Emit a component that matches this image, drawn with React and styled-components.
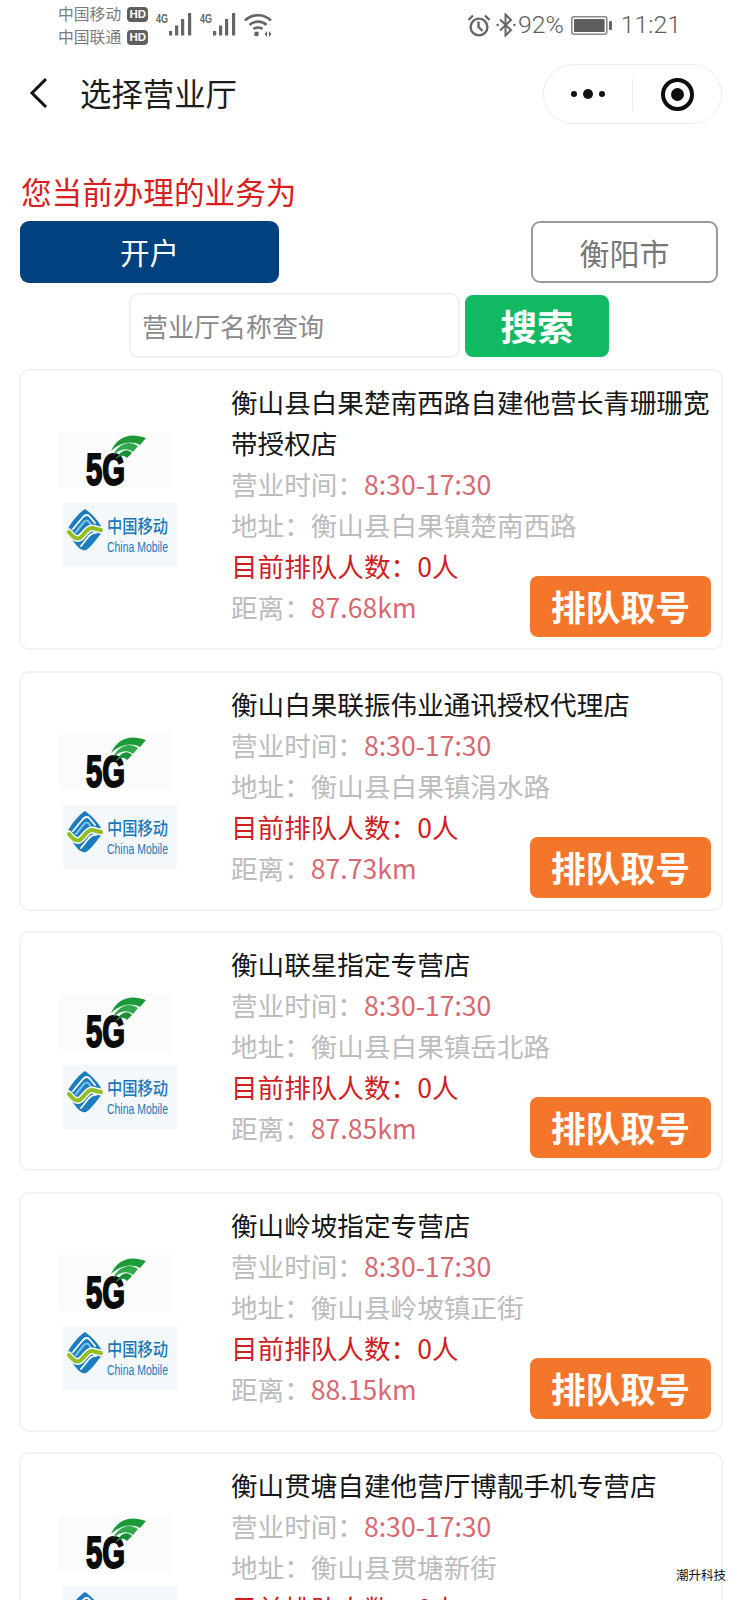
import React from 'react';
import styled, { createGlobalStyle } from 'styled-components';

const FONT = '"Noto Sans CJK SC", "Noto Sans", sans-serif';

const halls = [
  { name: '衡山县白果楚南西路自建他营长青珊珊宽带授权店', address: '衡山县白果镇楚南西路', distance: '87.68km' },
  { name: '衡山白果联振伟业通讯授权代理店', address: '衡山县白果镇涓水路', distance: '87.73km' },
  { name: '衡山联星指定专营店', address: '衡山县白果镇岳北路', distance: '87.85km' },
  { name: '衡山岭坡指定专营店', address: '衡山县岭坡镇正街', distance: '88.15km' },
  // the last card runs off the bottom of the screen, its distance is never seen
  { name: '衡山贯塘自建他营厅博靓手机专营店', address: '衡山县贯塘新街', distance: '' }
];

const GlobalStyle = createGlobalStyle`
  html, body {
    margin: 0;
    padding: 0;
    background: #fff;
  }
  #root {
    width: 738px;
    height: 1600px;
    overflow: hidden;
  }
`;

const Page = styled.div`
  position: relative;
  width: 738px;
  height: 1600px;
  overflow: hidden;
  background: #fff;
  font-family: ${FONT};
`;

const StatusBar = styled.div`
  height: 52px;
  display: flex;
  align-items: flex-start;
  justify-content: space-between;
  padding: 0 57px 0 58px;
  color: #6f6f6f;
`;

const StatusLeft = styled.div`
  display: flex;
  align-items: flex-start;
`;

const Carriers = styled.div`
  display: flex;
  flex-direction: column;
  gap: 7px;
  padding-top: 6px;
  margin-right: 8px;
`;

const Carrier = styled.div`
  display: flex;
  align-items: center;
  gap: 6px;
  height: 16px;
  font-size: 15.8px;
  line-height: 16px;
  color: #7c7c7c;
`;

const HdBadge = styled.span`
  width: 21px;
  height: 15px;
  border-radius: 4px;
  background: #5f5f5f;
  color: #fff;
  font-family: "Liberation Sans", sans-serif;
  font-size: 11.5px;
  font-weight: 700;
  line-height: 15px;
  text-align: center;
`;

const StatusIcons = styled.div`
  display: flex;
  align-items: flex-start;
  gap: 7px;
  padding-top: 13px;
`;

const StatusRight = styled.div`
  display: flex;
  align-items: center;
  height: 50px;
`;

const StatusText = styled.span`
  font-family: Roboto, sans-serif;
  font-size: 24.8px;
  font-weight: 300;
  line-height: 50px;
  color: #5c5c5c;
`;

const NavBar = styled.div`
  height: 82px;
  display: flex;
  align-items: center;
  padding: 0 16px 0 28px;
`;

const NavTitle = styled.div`
  flex: 1;
  margin-left: 32px;
  font-size: 31.4px;
  line-height: 40px;
  color: #1c1c1c;
`;

const Capsule = styled.div`
  box-sizing: border-box;
  width: 179px;
  height: 60px;
  margin-top: 2px;
  display: flex;
  align-items: center;
  border: 1px solid #ececec;
  border-radius: 30px;
`;

const CapsulePart = styled.div`
  flex: 1;
  display: flex;
  align-items: center;
  justify-content: center;
  gap: 6px;
`;

const CapsuleDivider = styled.div`
  width: 1px;
  height: 33px;
  background: #ededed;
`;

const Dot = styled.span`
  width: ${p => p.$size}px;
  height: ${p => p.$size}px;
  border-radius: 50%;
  background: #111;
`;

const TargetRing = styled.div`
  box-sizing: border-box;
  width: 33px;
  height: 33px;
  border: 4px solid #0c0c0c;
  border-radius: 50%;
  display: flex;
  align-items: center;
  justify-content: center;
`;

const TargetDot = styled.span`
  width: 13px;
  height: 13px;
  border-radius: 50%;
  background: #0c0c0c;
`;

const Content = styled.div`
  padding: 37px 15px 0 19px;
`;

const Notice = styled.div`
  padding-left: 2px;
  font-size: 30.6px;
  line-height: 40px;
  color: #d81e1e;
`;

const BusinessRow = styled.div`
  display: flex;
  justify-content: space-between;
  margin: 10px 5px 0 1px;
`;

const BusinessButton = styled.div`
  width: 259px;
  height: 62px;
  border-radius: 9px;
  background: #02417f;
  color: #fff;
  font-size: 29.6px;
  line-height: 62px;
  text-align: center;
`;

const CityButton = styled.div`
  box-sizing: border-box;
  width: 187px;
  height: 62px;
  border: 2px solid #9b9b9b;
  border-radius: 9px;
  color: #777;
  font-size: 30px;
  line-height: 58px;
  text-align: center;
`;

const SearchRow = styled.div`
  display: flex;
  align-items: center;
  gap: 5px;
  margin: 10px 0 11px 110px;
`;

const SearchInput = styled.div`
  box-sizing: border-box;
  width: 331px;
  height: 65px;
  padding-left: 11px;
  border: 2px solid #f0f0f0;
  border-radius: 9px;
  color: #8a8a8a;
  font-size: 26px;
  line-height: 61px;
`;

const SearchButton = styled.div`
  width: 144px;
  height: 62px;
  border-radius: 8px;
  background: #11b963;
  color: #fff;
  font-size: 36.6px;
  font-weight: 700;
  line-height: 62px;
  text-align: center;
`;

const CardList = styled.div`
  display: flex;
  flex-direction: column;
  gap: 20.6px;
`;

const Card = styled.div`
  position: relative;
  display: flex;
  padding: 10px 8px 21px 0;
  border: 2px solid #f2f2f2;
  border-radius: 10px;
`;

const LogoColumn = styled.div`
  flex: none;
  width: 173px;
  padding: 51px 0 0 37px;
  display: flex;
  flex-direction: column;
  gap: 15px;
`;

const Info = styled.div`
  flex: 1;
  min-width: 0;
  font-size: 26.6px;
  line-height: 41px;
`;

const HallName = styled.div`
  color: #161616;
`;

const InfoLine = styled.div`
  color: ${p => p.$color || '#bcbcbc'};
`;

const Value = styled.span`
  color: #d8696f;
`;

const TicketButton = styled.div`
  position: absolute;
  right: 10px;
  bottom: 11px;
  width: 181px;
  height: 61px;
  border-radius: 8px;
  background: #f3762b;
  color: #fff;
  font-size: 34.8px;
  font-weight: 700;
  line-height: 61px;
  text-align: center;
`;

const Watermark = styled.div`
  position: absolute;
  right: 12px;
  top: 1566px;
  font-size: 12.5px;
  line-height: 18px;
  color: #111;
`;

const LogoBox = styled.svg`
  display: block;
  overflow: visible;
  background: ${p => p.$bg};
  margin-left: ${p => p.$indent || 0}px;
`;

const Signal = () => (
  <svg width="37" height="23" viewBox="0 0 37 23">
    <text x="0" y="10" fontFamily="Liberation Sans, sans-serif" fontWeight="700" fontSize="12" fill="#666" textLength="12" lengthAdjust="spacingAndGlyphs">4G</text>
    <g fill="#666">
      <rect x="13" y="18" width="3.2" height="4.5" />
      <rect x="19" y="12.5" width="3.2" height="10" />
      <rect x="25" y="6" width="3.2" height="16.5" />
      <rect x="32" y="0" width="3.2" height="22.5" />
    </g>
  </svg>
);

const Wifi = () => (
  <svg width="28" height="24" viewBox="0 0 28 24" fill="none" stroke="#666" strokeWidth="2.6">
    <path d="M1 7.5 C8 0.5 20 0.5 27 7.5" />
    <path d="M5.5 12 C10 7.5 18 7.5 22.5 12" />
    <path d="M9.5 16 C12 14 16 14 18.5 16" />
    <circle cx="12.5" cy="21" r="2.4" fill="#666" stroke="none" />
    <path d="M20.5 21 l2.6 -3 v6 z M27.5 21 l-2.6 -3 v6 z" fill="#666" stroke="none" />
  </svg>
);

const Alarm = () => (
  <svg width="24" height="23" viewBox="0 0 24 23" fill="none" stroke="#666" strokeWidth="2.4">
    <circle cx="12" cy="13" r="8.4" />
    <path d="M11.5 7.5 V13 L15.5 17" />
    <path d="M1.5 6 L6 1.5 M22.5 6 L18 1.5" />
  </svg>
);

const Bluetooth = () => (
  <svg width="20" height="24" viewBox="0 0 20 24" fill="none" stroke="#666" strokeWidth="2" style={{ margin: '0 2px 0 5px' }}>
    <path d="M4 6.5 L15 17 L9.5 22.5 V1.5 L15 7 L4 17.5" />
    <circle cx="1.6" cy="12" r="1.3" fill="#666" stroke="none" />
    <circle cx="18.4" cy="12" r="1.3" fill="#666" stroke="none" />
  </svg>
);

const Battery = () => (
  <svg width="41" height="19" viewBox="0 0 41 19" style={{ margin: '0 9px 0 7px' }}>
    <rect x="0.8" y="0.8" width="35" height="17.4" rx="2.4" fill="none" stroke="#8a8a8a" strokeWidth="1.6" />
    <rect x="3" y="3" width="30.6" height="13" fill="#5f5f5f" />
    <rect x="38" y="5" width="3" height="9" rx="1" fill="#666" />
  </svg>
);

const BackIcon = () => (
  <svg width="20" height="32" viewBox="0 0 20 32" fill="none" stroke="#111" strokeWidth="3">
    <path d="M18 2 L4 16 L18 30" />
  </svg>
);

const FiveGLogo = () => (
  <LogoBox $bg="#fbfbfb" width="115" height="56" viewBox="0 0 115 56">
    <text
      x="28"
      y="53"
      fontFamily="Liberation Sans, sans-serif"
      fontSize="44"
      fontWeight="700"
      fill="#0b0b0b"
      stroke="#0b0b0b"
      strokeWidth="2"
      textLength="39"
      lengthAdjust="spacingAndGlyphs"
    >
      5G
    </text>
    <path d="M53 19 C58 7 70 -1 88 6 L82 13 C72 8 62 11 53 19 Z" fill="#1c9a3a" />
    <path d="M55 23 C60 13 70 7 80 14 L75 20 C69 15 62 17 55 23 Z" fill="#2fa94b" />
    <path d="M57 28 C62 20 68 15 74 21 L69 26 C65 22 62 24 57 28 Z" fill="#1a8f35" />
  </LogoBox>
);

const MobileLogo = () => (
  <LogoBox $bg="#f5f8fb" $indent={5} width="114" height="64" viewBox="0 0 114 64">
    <path
      d="M22 6 C28 10 36 18 39 25 C40 28 38 31 36 33 C32 38 28 44 23 47 C20 48 17 46 14 43 L7 34 C4 30 4 26 7 22 C11 16 17 9 22 6 Z"
      fill="#1b7dbd"
    />
    <g fill="none" strokeLinecap="round">
      <path d="M10 26 L20 14 Q24 10 27 14 L32 20" stroke="#fff" strokeWidth="1.8" />
      <path d="M13 29 L21 19 Q24 16 26 19 L28 22" stroke="#7cc0e6" strokeWidth="2.2" />
      <path d="M18 43 L26 33 Q30 29 33 30" stroke="#fff" strokeWidth="1.8" />
      <path d="M6 29 C12 37 16 37 20 32 C24 27 27 23 33 26 L38 27" stroke="#f5f8fb" strokeWidth="7" />
      <path d="M6 29 C12 37 16 37 20 32 C24 27 27 23 33 26 L38 27" stroke="#93bf23" strokeWidth="4" />
    </g>
    <text
      x="44"
      y="30"
      fontFamily={FONT}
      fontSize="18"
      fontWeight="500"
      fill="#1b78b8"
      textLength="61"
      lengthAdjust="spacingAndGlyphs"
    >
      中国移动
    </text>
    <text
      x="44"
      y="49"
      fontFamily="Liberation Sans, sans-serif"
      fontSize="14"
      fill="#1b78b8"
      textLength="61"
      lengthAdjust="spacingAndGlyphs"
    >
      China Mobile
    </text>
  </LogoBox>
);

export default function App() {
  return (
    <Page>
      <GlobalStyle />
      <StatusBar>
        <StatusLeft>
          <Carriers>
            <Carrier>中国移动<HdBadge>HD</HdBadge></Carrier>
            <Carrier>中国联通<HdBadge>HD</HdBadge></Carrier>
          </Carriers>
          <StatusIcons>
            <Signal />
            <Signal />
            <Wifi />
          </StatusIcons>
        </StatusLeft>
        <StatusRight>
          <Alarm />
          <Bluetooth />
          <StatusText>92%</StatusText>
          <Battery />
          <StatusText>11:21</StatusText>
        </StatusRight>
      </StatusBar>

      <NavBar>
        <BackIcon />
        <NavTitle>选择营业厅</NavTitle>
        <Capsule>
          <CapsulePart>
            <Dot $size={6} />
            <Dot $size={10} />
            <Dot $size={6} />
          </CapsulePart>
          <CapsuleDivider />
          <CapsulePart>
            <TargetRing><TargetDot /></TargetRing>
          </CapsulePart>
        </Capsule>
      </NavBar>

      <Content>
        <Notice>您当前办理的业务为</Notice>
        <BusinessRow>
          <BusinessButton>开户</BusinessButton>
          <CityButton>衡阳市</CityButton>
        </BusinessRow>
        <SearchRow>
          <SearchInput>营业厅名称查询</SearchInput>
          <SearchButton>搜索</SearchButton>
        </SearchRow>
        <CardList>
          {halls.map(hall => (
            <Card key={hall.name}>
              <LogoColumn>
                <FiveGLogo />
                <MobileLogo />
              </LogoColumn>
              <Info>
                <HallName>{hall.name}</HallName>
                <InfoLine>营业时间：<Value>8:30-17:30</Value></InfoLine>
                <InfoLine>地址：{hall.address}</InfoLine>
                <InfoLine $color="#cf1f1f">目前排队人数：0人</InfoLine>
                <InfoLine>距离：<Value>{hall.distance}</Value></InfoLine>
              </Info>
              <TicketButton>排队取号</TicketButton>
            </Card>
          ))}
        </CardList>
      </Content>

      <Watermark>潮升科技</Watermark>
    </Page>
  );
}
